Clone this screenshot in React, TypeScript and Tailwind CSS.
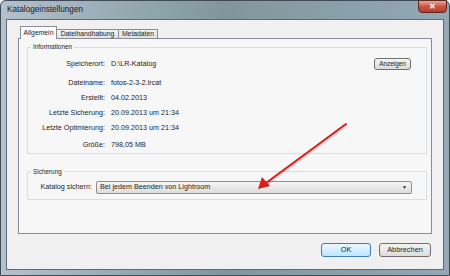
const rows = [
  { label: 'Dateiname:', value: 'fotos-2-3-2.lrcat', cls: 'mt-[4px]' },
  { label: 'Erstellt:', value: '04.02.2013', cls: '' },
  { label: 'Letzte Sicherung:', value: '20.09.2013 um 21:34', cls: '' },
  { label: 'Letzte Optimierung:', value: '20.09.2013 um 21:34', cls: '' },
  { label: 'Größe:', value: '798,05 MB', cls: 'mt-[2px]' },
];

export default function App() {
  return (
    <div className="relative w-[450px] h-[276px] overflow-hidden bg-[#f0f0f0] font-['Liberation_Sans',Tahoma,sans-serif] text-[7.2px] text-[#1e1e1e]">
      <div className="flex h-full flex-col rounded-t-[6px] border border-[#3f4b57] bg-gradient-to-r from-[#b3c1cd] via-[#7f979c] to-[#95a7b6] px-[5px] pb-[5px]">
        {/* title bar */}
        <div className="flex h-[18px] items-start justify-between">
          <span className="ml-px mt-[4px] text-[8.2px] leading-[10px] text-[#1a1a1a]">Katalogeinstellungen</span>
          <button className="-mr-[3px] -mt-px flex h-[13px] w-[29px] items-center justify-center rounded-b-[4px] border border-[#5a2a25] bg-gradient-to-b from-[#eaa598] via-[#cc5443] to-[#b53d2b] text-[8px] font-bold leading-none text-white">
            ✕
          </button>
        </div>

        {/* client area */}
        <div className="flex flex-1 flex-col border border-[#5b6b7b] bg-[#f0f0f0]">
          {/* tabs */}
          <div className="z-10 -mb-px mt-[6px] flex h-[13px] items-end pl-[13px]">
            <div className="flex h-[13px] w-[37px] items-center justify-center border border-b-0 border-[#898c95] bg-[#fbfbfb] text-[6.8px]">Allgemein</div>
            <div className="flex h-[10px] w-[62px] items-center justify-center border border-l-0 border-[#898c95] bg-gradient-to-b from-[#f2f2f2] to-[#e1e1e1] text-[6.8px]">Dateihandhabung</div>
            <div className="flex h-[10px] w-[39px] items-center justify-center border border-l-0 border-[#898c95] bg-gradient-to-b from-[#f2f2f2] to-[#e1e1e1] text-[6.8px]">Metadaten</div>
          </div>

          {/* tab panel */}
          <div className="ml-[11px] mr-[11px] flex h-[196px] flex-col border border-[#898c95] bg-[#f7f7f7]">
            <fieldset className="ml-[8px] mr-[4px] mt-[3px] border border-[#d5dfe5]">
              <legend className="ml-[3px] px-[2px] text-[6.4px] leading-[10px]">Informationen</legend>
              <div className="mt-[4.5px] flex h-[15px] items-center">
                <span className="w-[77px] text-right">Speicherort:</span>
                <span className="ml-[6px] flex-1">D:\LR-Katalog</span>
                <button className="mr-[15px] h-[12px] w-[37px] rounded-[3px] border border-[#707070] bg-gradient-to-b from-[#f4f4f4] to-[#dcdcdc] text-[6.4px] leading-none">
                  Anzeigen
                </button>
              </div>
              {rows.map((r) => (
                <div key={r.label} className={`flex h-[15px] items-center ${r.cls}`}>
                  <span className="w-[77px] text-right">{r.label}</span>
                  <span className="ml-[6px]">{r.value}</span>
                </div>
              ))}
            </fieldset>

            <fieldset className="ml-[8px] mr-[4px] mt-[13px] border border-[#d5dfe5] pb-[5px]">
              <legend className="ml-[3px] px-[2px] text-[6.4px] leading-[10px]">Sicherung</legend>
              <div className="mt-[4px] flex h-[13px] items-center">
                <span className="w-[64px] text-right">Katalog sichern:</span>
                <div className="ml-[4px] flex h-[13px] w-[316px] items-center justify-between rounded-[2px] border border-[#8e8f8f] bg-gradient-to-b from-[#f6f6f6] to-[#dddddd] pl-[3px] pr-[4px]">
                  <span>Bei jedem Beenden von Lightroom</span>
                  <span className="text-[5px] leading-none">▼</span>
                </div>
              </div>
            </fieldset>
          </div>

          {/* buttons */}
          <div className="mr-[12px] mt-[9px] flex justify-end gap-[8px]">
            <button className="h-[14px] w-[50px] rounded-[3px] border border-[#3c7fb1] bg-gradient-to-b from-[#eaf6fd] to-[#bee6fd] text-[7.4px] leading-none">OK</button>
            <button className="h-[14px] w-[52px] rounded-[3px] border border-[#707070] bg-gradient-to-b from-[#f4f4f4] to-[#dcdcdc] text-[7.4px] leading-none">Abbrechen</button>
          </div>
        </div>
      </div>

      {/* red annotation arrow */}
      <svg className="pointer-events-none absolute left-0 top-0" width="450" height="276">
        <line x1="346" y1="124" x2="266" y2="183" stroke="#00000022" strokeWidth="3" transform="translate(1,1)" />
        <line x1="346" y1="124" x2="266" y2="183" stroke="#d51f1f" strokeWidth="2" strokeLinecap="round" />
        <polygon points="258,189 262,177 270,186" fill="#d51f1f" />
      </svg>
    </div>
  );
}
